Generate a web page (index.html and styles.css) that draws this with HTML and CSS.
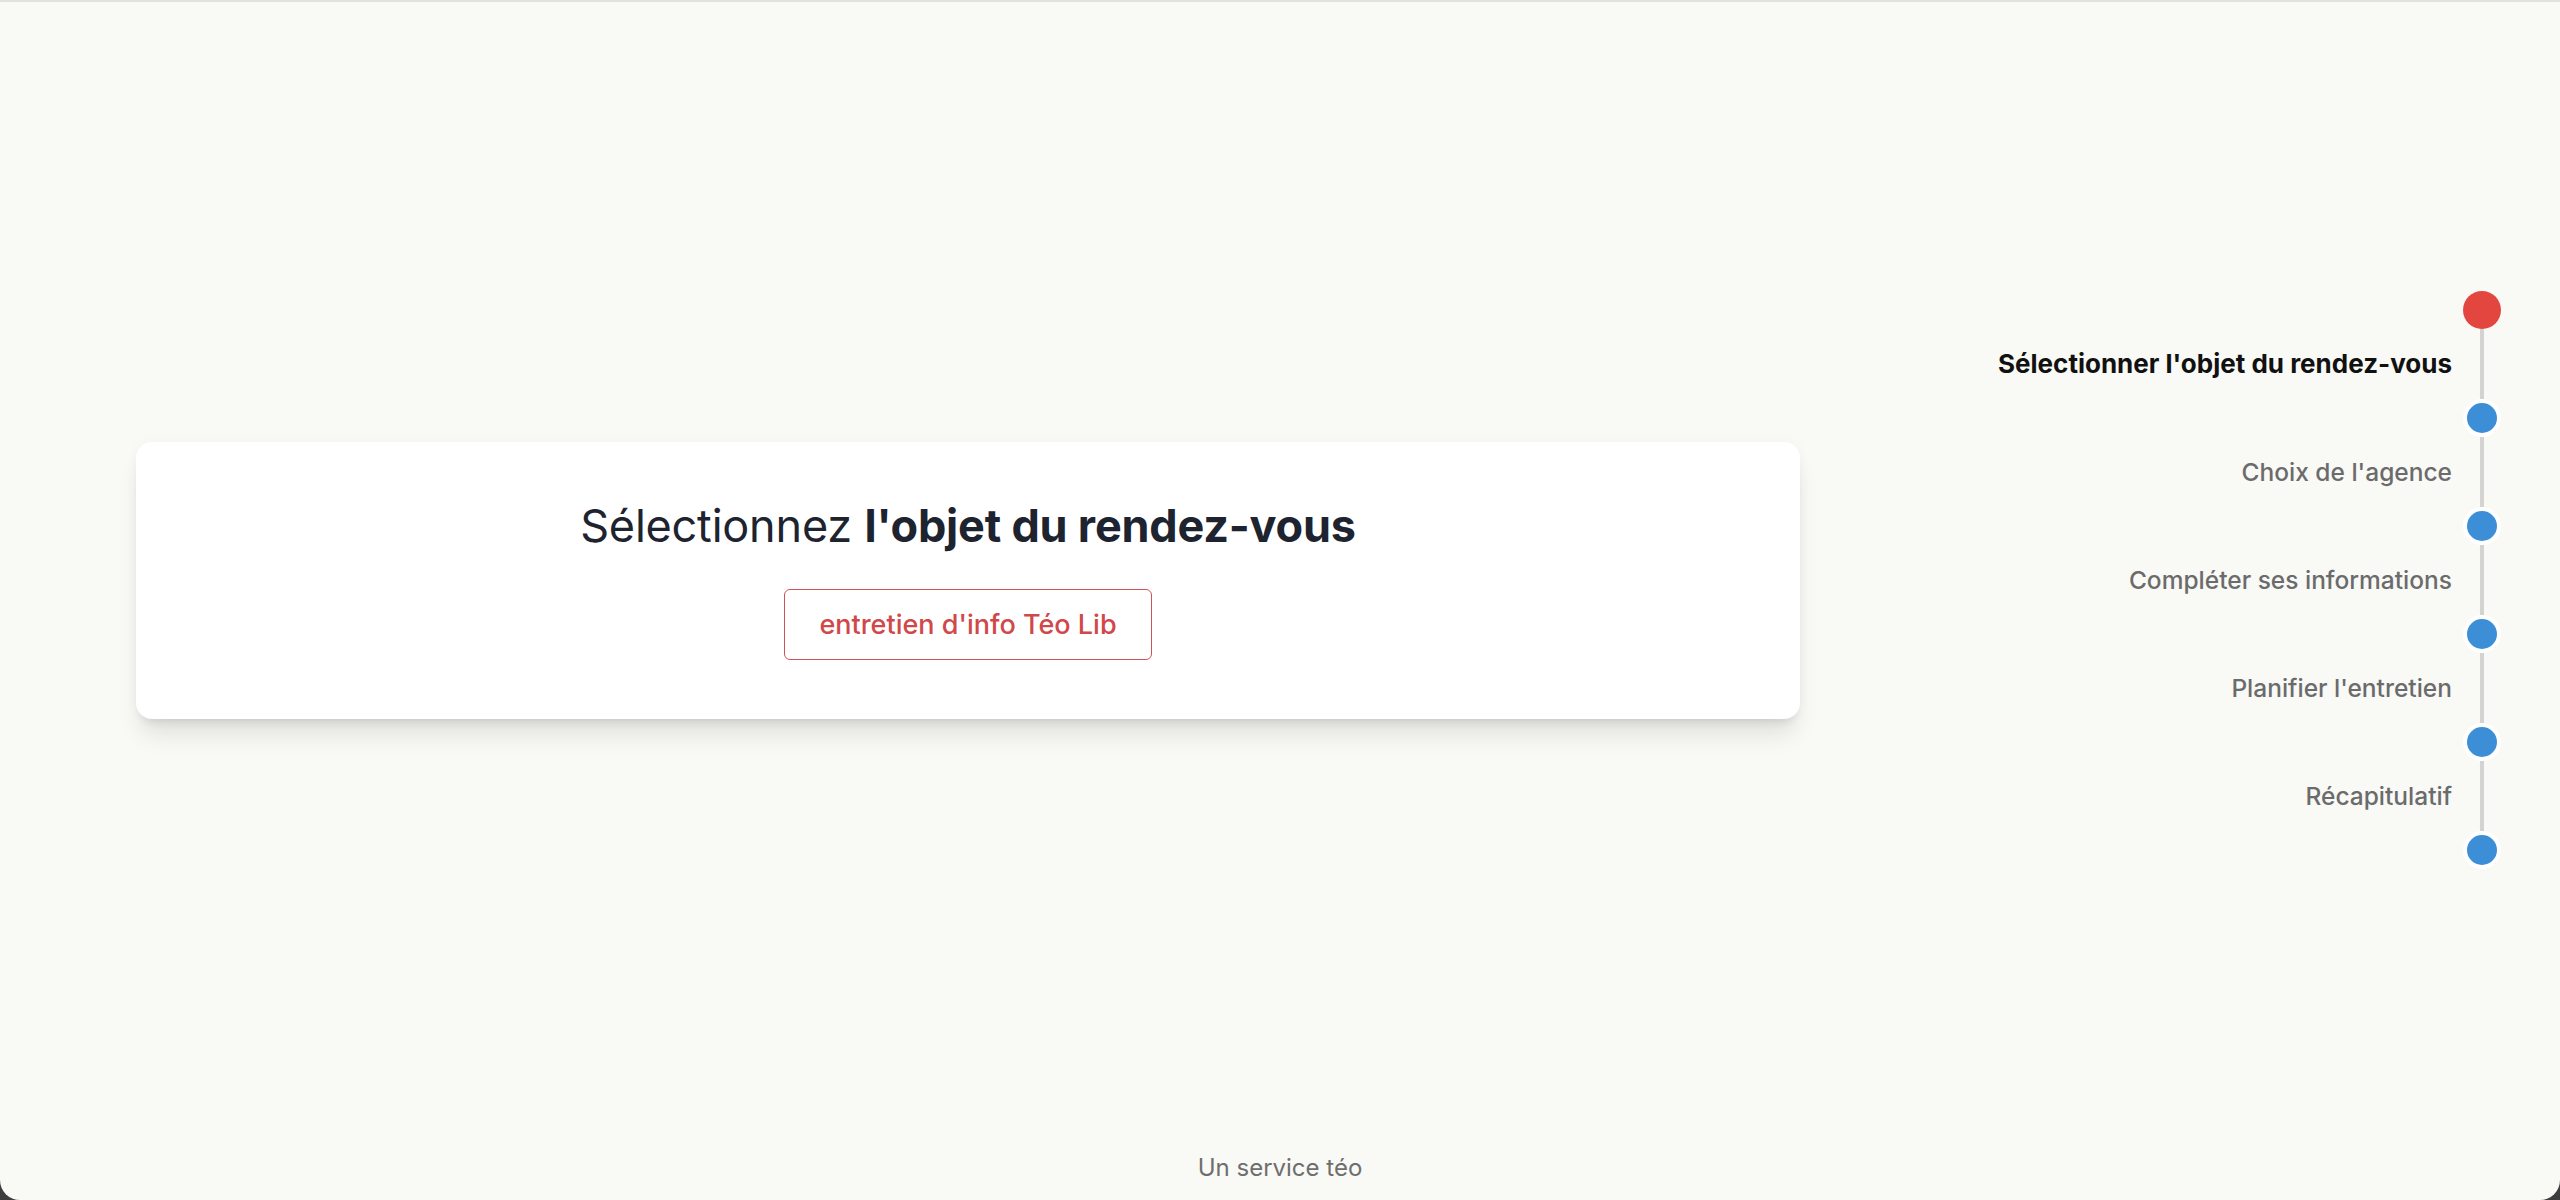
FILE: index.html
```html
<!DOCTYPE html>
<html lang="fr">
<head>
<meta charset="utf-8">
<title>Prise de rendez-vous</title>
<link rel="stylesheet" href="styles.css">
</head>
<body>
<div class="window">
  <main class="main">
    <section class="card">
      <h1 class="title">Sélectionnez <strong>l'objet du rendez-vous</strong></h1>
      <button class="choice" type="button">entretien d'info Téo Lib</button>
    </section>
    <nav class="stepper">
      <span class="label"></span><span class="dot dot-active"></span>
      <span class="label label-active">Sélectionner l'objet du rendez-vous</span><span class="seg"></span>
      <span class="label"></span><span class="dot"></span>
      <span class="label">Choix de l'agence</span><span class="seg"></span>
      <span class="label"></span><span class="dot"></span>
      <span class="label">Compléter ses informations</span><span class="seg"></span>
      <span class="label"></span><span class="dot"></span>
      <span class="label">Planifier l'entretien</span><span class="seg"></span>
      <span class="label"></span><span class="dot"></span>
      <span class="label">Récapitulatif</span><span class="seg"></span>
      <span class="label"></span><span class="dot"></span>
    </nav>
  </main>
  <footer class="footer">Un service téo</footer>
</div>
</body>
</html>
```
FILE: styles.css
```css
html, body {
  margin: 0;
  padding: 0;
  background: #3d3d3d;
}

.window {
  height: 1200px;
  box-sizing: border-box;
  background: #f9f9f6;
  border-top: 2px solid #e2e2de;
  border-radius: 0 0 20px 20px;
  display: flex;
  flex-direction: column;
  font-family: Inter, "Noto Sans", "DejaVu Sans", sans-serif;
  overflow: hidden;
}

.main {
  flex: 1;
  display: flex;
  align-items: center;
  padding: 0 59px 0 136px;
}

.card {
  width: 1664px;
  flex: 0 0 1664px;
  box-sizing: border-box;
  height: 277px;
  padding-top: 57px;
  background: #ffffff;
  border-radius: 16px;
  box-shadow: 0 20px 25px -5px rgba(0, 0, 0, 0.10), 0 8px 10px -6px rgba(0, 0, 0, 0.10), 0 0 14px rgba(0, 0, 0, 0.03);
  display: flex;
  flex-direction: column;
  align-items: center;
}

.title {
  margin: 0;
  font-size: 45px;
  line-height: 54px;
  font-weight: 400;
  color: #1e2330;
  letter-spacing: -0.2px;
}

.title strong {
  font-weight: 700;
}

.choice {
  margin-top: 36px;
  height: 71px;
  padding: 0 34px;
  background: #ffffff;
  border: 1px solid #cf5358;
  border-radius: 6px;
  color: #d04849;
  font-family: inherit;
  font-size: 27px;
  font-weight: 500;
}

.stepper {
  margin-left: auto;
  display: grid;
  grid-template-columns: auto 38px;
  column-gap: 11px;
  justify-items: center;
}

.label {
  justify-self: end;
  align-self: center;
  font-size: 24.5px;
  line-height: 30px;
  font-weight: 500;
  color: #6b6b6b;
  white-space: nowrap;
}

.label-active {
  font-size: 26px;
  color: #111111;
  font-weight: 700;
}

.dot {
  width: 30px;
  height: 30px;
  border: 4px solid #ffffff;
  border-radius: 50%;
  background: #3c8fd6;
}

.dot-active {
  width: 38px;
  height: 38px;
  border: 0;
  background: #e3453f;
}

.seg {
  width: 4px;
  height: 70px;
  background: #d3d3d1;
}

.footer {
  height: 42px;
  text-align: center;
  font-size: 24px;
  line-height: 20px;
  color: #6e6e6e;
}
```
